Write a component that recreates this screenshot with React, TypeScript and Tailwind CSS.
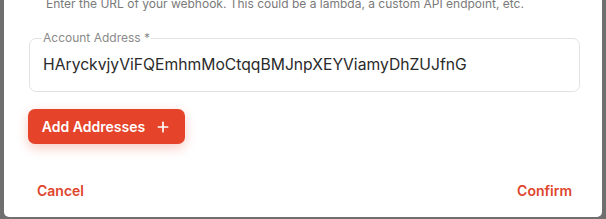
import { Plus } from "lucide-react";

// Modal fragment: webhook helper text, outlined address field, add button and footer actions.
export default function App() {
  return (
    <div className="h-[219px] w-[606px] overflow-hidden bg-[#6f6f6f] pl-[4px] font-['Inter',sans-serif]">
      <div className="flex h-[217px] w-[598px] flex-col rounded-b-[5px] bg-white">
        <p className="-mt-[4px] pl-[42px] text-[12px] leading-[16px] text-[#7a7a7a]">
          Enter the URL of your webhook. This could be a lambda, a custom API endpoint, etc.
        </p>

        <fieldset className="ml-[25px] mt-[20px] h-[60px] w-[551px] rounded-[7px] border border-[#e2e2e2] px-[13px]">
          <legend className="ml-[-1px] px-[1px] text-[12px] leading-[12px] text-[#8a8a8a]">
            Account Address *
          </legend>
          <div className="mt-[11px] text-[15.7px] leading-[20px] text-[#2a2a2a]">
            HAryckvjyViFQEmhmMoCtqqBMJnpXEYViamyDhZUJfnG
          </div>
        </fieldset>

        <div className="ml-[24px] mt-[17px]">
          <button className="flex h-[35px] w-[157px] items-center justify-center gap-[10px] rounded-[7px] bg-[#e5432a] text-[14px] font-semibold text-white shadow-[0_4px_12px_rgba(229,67,42,0.28)]">
            Add Addresses
            <Plus size={16} strokeWidth={2.5} />
          </button>
        </div>

        <div className="mt-auto mb-[16px] flex items-center justify-between pl-[33px] pr-[30px] text-[14px] font-semibold text-[#e0452c]">
          <button>Cancel</button>
          <button>Confirm</button>
        </div>
      </div>
    </div>
  );
}
